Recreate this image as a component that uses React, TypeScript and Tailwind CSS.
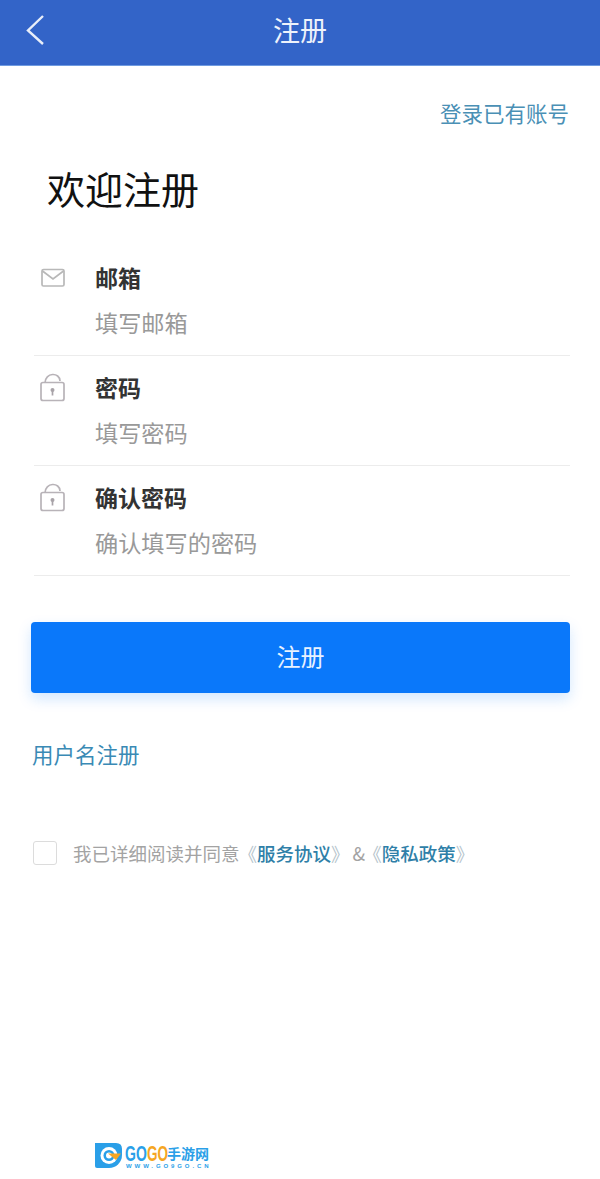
const cjk = { fontFamily: '"Noto Sans CJK SC", "Noto Sans", sans-serif' };

const MailIcon = () => (
  <svg width="24" height="20" viewBox="0 0 24 20" fill="none" stroke="#b8b8b8" strokeWidth="1.7" className="ml-[1px]">
    <rect x="1" y="1.5" width="22" height="16.5" rx="1.5" />
    <path d="M1.5 3 L12 11 L22.5 3" />
  </svg>
);

const LockIcon = () => (
  <svg width="26" height="30" viewBox="0 0 26 30" fill="none" stroke="#b8b3b8" strokeWidth="1.7">
    <path d="M5 10 C5 -1 20 -1 20 8" />
    <rect x="1" y="9.5" width="23" height="18" rx="2" />
    <circle cx="12.5" cy="17" r="2" fill="#a8a3a8" stroke="none" />
    <path d="M12.5 17 V22.5" stroke="#a8a3a8" />
  </svg>
);

// GOGO is tall and narrow in the logo, so the letters are stretched upward
const Logo = () => (
  <svg width="116" height="26" viewBox="0 0 116 26">
    <path d="M0 0 H21 Q27 0 27 6 V12 A13 13 0 0 1 14 25 H2 Q0 25 0 23 Z" fill="#2a9fe8" />
    <circle cx="14" cy="12.5" r="8.5" fill="#ffffff" />
    <circle cx="14" cy="12.5" r="5.5" fill="#2a9fe8" />
    <circle cx="14" cy="12.5" r="3" fill="#ffffff" />
    <path d="M13 10.5 H26 L21 17 Z" fill="#f5a623" />
    <text transform="translate(30 18) scale(1 1.6)" fontFamily="Liberation Sans" fontWeight="700" fontSize="14" fill="#2a9fe8">GO</text>
    <text transform="translate(52 18) scale(1 1.6)" fontFamily="Liberation Sans" fontWeight="700" fontSize="13.5" fill="#f5a623">GO</text>
    <text x="72" y="16" fontFamily="Noto Sans CJK SC" fontWeight="700" fontSize="14" fill="#2a9fe8">手游网</text>
    <text x="31" y="25" fontFamily="Liberation Sans" fontWeight="700" fontSize="6" letterSpacing="2.9" fill="#2a9fe8">WWW.GO9GO.CN</text>
  </svg>
);

const Field = ({ icon, label, hint, iconTop }: { icon: React.ReactNode; label: string; hint: string; iconTop: string }) => (
  <div className="flex h-[110px] border-b border-[#ececec] pl-[6px]">
    <div className={`w-[55px] h-[40px] ${iconTop}`}>{icon}</div>
    <div className="flex flex-col">
      <span className="mt-[14px] text-[23px] leading-[34px] font-bold text-[#333333]">{label}</span>
      <span className="mt-[11px] text-[23.2px] leading-[34px] text-[#999999]">{hint}</span>
    </div>
  </div>
);

const App = () => {
  return (
    <div className="w-[600px] h-[1179px] bg-white flex flex-col" style={cjk}>
      <div className="relative h-[66px] shrink-0 bg-[#3364c8] flex items-center justify-center border-b border-[#6f9be0]">
        <svg className="absolute left-[24px] top-[14px]" width="22" height="32" viewBox="0 0 22 32" fill="none" stroke="#e8eef9" strokeWidth="2.4">
          <path d="M19 2 L4 16.5 L19 30" />
        </svg>
        <span className="text-[27px] leading-[40px] text-[#eef2fb] mb-[6px]">注册</span>
      </div>

      <div className="flex justify-end pr-[31px] pt-[31px]">
        <span className="text-[21.5px] leading-[32px] text-[#4a90b5]">登录已有账号</span>
      </div>

      <h1 className="pl-[47px] mt-[31px] text-[38px] leading-[56px] font-normal text-[#111111]">欢迎注册</h1>

      <div className="mt-[30px] ml-[34px] mr-[30px]">
        <Field icon={<MailIcon />} iconTop="pt-[22px]" label="邮箱" hint="填写邮箱" />
        <Field icon={<LockIcon />} iconTop="pt-[17px]" label="密码" hint="填写密码" />
        <Field icon={<LockIcon />} iconTop="pt-[17px]" label="确认密码" hint="确认填写的密码" />
      </div>

      <button className="mt-[46px] ml-[31px] w-[539px] h-[71px] shrink-0 rounded-[4px] bg-[#0a78fa] pb-[4px] text-[24px] text-[#e8f2ff] shadow-[0_6px_14px_rgba(10,120,250,0.18)]">
        注册
      </button>

      <div className="mt-[45px] pl-[32px] text-[21.5px] leading-[32px] text-[#3a8ab5]">用户名注册</div>

      <div className="mt-[69px] pl-[33px] flex items-center">
        <span className="w-[24px] h-[24px] rounded-[3px] border border-[#dcdcdc]" />
        <span className="ml-[16px] text-[18.5px] leading-[28px] text-[#a3a3a3] whitespace-nowrap">
          我已详细阅读并同意<span className="-ml-[1px] text-[#b5c4cc]">《</span>
          <span className="font-medium text-[#2f7fa8]">服务协议</span>
          <span className="text-[#b5c4cc]">》</span>
          <span className="ml-[3px]">&amp;</span>
          <span className="-ml-[2px] text-[#b5c4cc]">《</span>
          <span className="font-medium text-[#2f7fa8]">隐私政策</span>
          <span className="text-[#b5c4cc]">》</span>
        </span>
      </div>

      <div className="mt-auto mb-[10px] ml-[95px] flex">
        <Logo />
      </div>
    </div>
  );
};

export default App;
